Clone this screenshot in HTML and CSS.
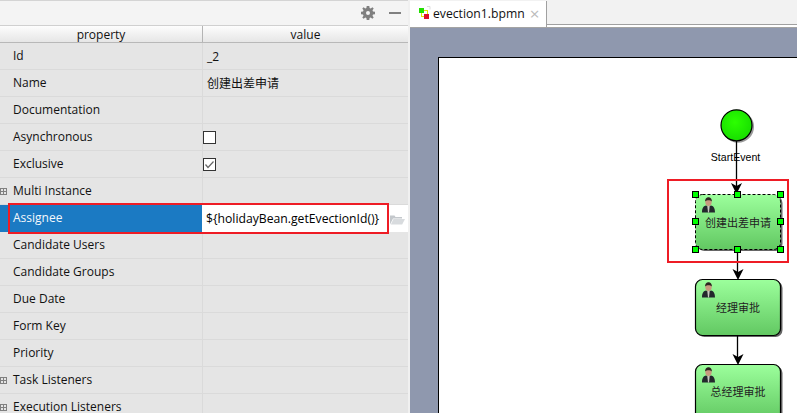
FILE: index.html
```html
<!DOCTYPE html>
<html lang="zh-CN">
<head>
  <meta charset="UTF-8" />
  <title>evection1.bpmn</title>
  <link rel="stylesheet" href="styles.css">
</head>
<body>
  <div class="app">

    <section class="props">
      <div class="toolbar">
        <svg class="gear" width="14" height="14" viewBox="0 0 14 14">
          <path fill="#808080" fill-rule="evenodd" d="M5.700 0h2.600l.3 2 1.100.5L11.400 1.300l1.300 1.300-1.200 1.700.5 1.100 2 .3v2.600l-2 .3-.5 1.100 1.200 1.700-1.300 1.300-1.700-1.200-1.100.5-.3 2H5.700l-.3-2-1.100-.5-1.700 1.200-1.300-1.300 1.200-1.700-.5-1.100-2-.3V5.700l2-.3.5-1.100L1.300 2.600l1.300-1.300 1.700 1.200 1.100-.5zM7 5a2 2 0 1 0 0 4 2 2 0 0 0 0-4z"/>
        </svg>
        <span class="minimize"></span>
      </div>

      <div class="table-head">
        <div class="col-name">property</div>
        <div class="col-value">value</div>
      </div>

      <div class="row"><div class="cell-name">Id</div><div class="cell-value">_2</div></div>
      <div class="row"><div class="cell-name">Name</div><div class="cell-value">创建出差申请</div></div>
      <div class="row"><div class="cell-name">Documentation</div><div class="cell-value"></div></div>
      <div class="row"><div class="cell-name">Asynchronous</div><div class="cell-value"><span class="checkbox"></span></div></div>
      <div class="row">
        <div class="cell-name">Exclusive</div>
        <div class="cell-value">
          <span class="checkbox">
            <svg width="11" height="11" viewBox="0 0 11 11"><path d="M1.500 5.500l2.500 3 5.500-6" fill="none" stroke="#666" stroke-width="1.200"/></svg>
          </span>
        </div>
      </div>
      <div class="row"><div class="cell-name"><span class="expander"></span>Multi Instance</div><div class="cell-value"></div></div>
      <div class="row row-selected">
        <div class="cell-name">Assignee</div>
        <div class="cell-value">
          <span class="value-input">${holidayBean.getEvectionId()}</span>
          <svg class="folder" width="15" height="11" viewBox="0 0 15 11">
            <path fill="#c4c8cc" d="M0 1.500h4.500l1 1.500H12v1.500H3L0 10.500z"/>
            <path fill="#d8dbde" d="M3.500 5H15l-2.800 5.500H.8z"/>
          </svg>
        </div>
      </div>
      <div class="row"><div class="cell-name">Candidate Users</div><div class="cell-value"></div></div>
      <div class="row"><div class="cell-name">Candidate Groups</div><div class="cell-value"></div></div>
      <div class="row"><div class="cell-name">Due Date</div><div class="cell-value"></div></div>
      <div class="row"><div class="cell-name">Form Key</div><div class="cell-value"></div></div>
      <div class="row"><div class="cell-name">Priority</div><div class="cell-value"></div></div>
      <div class="row"><div class="cell-name"><span class="expander"></span>Task Listeners</div><div class="cell-value"></div></div>
      <div class="row"><div class="cell-name"><span class="expander"></span>Execution Listeners</div><div class="cell-value"></div></div>

      <div class="callout callout-row"></div>
    </section>

    <section class="editor">
      <div class="tabs">
        <div class="tab">
          <svg class="tab-icon" width="14" height="14" viewBox="0 0 14 14">
            <rect x="2.500" y="4.500" width="6" height="6" fill="none" stroke="#e6e600" stroke-width="1"/>
            <path d="M8 .5h3M11 .5v3" fill="none" stroke="#ddd"/>
            <rect x="0" y="2" width="5" height="5" fill="#22e000"/>
            <rect x="5" y="8" width="5" height="5" fill="#e0102c"/>
          </svg>
          <span class="tab-title">evection1.bpmn</span>
          <span class="tab-close">×</span>
        </div>
      </div>

      <div class="canvas">
        <div class="sheet"></div>

        <svg class="diagram" width="387" height="385" viewBox="410 28 387 385">
          <defs>
            <linearGradient id="taskFill" x1="0" y1="0" x2="0" y2="1">
              <stop offset="0" stop-color="#9cff9c"/>
              <stop offset="1" stop-color="#62c862"/>
            </linearGradient>
            <radialGradient id="startFill" cx="0.45" cy="0.4" r="0.7">
              <stop offset="0" stop-color="#2cff00"/>
              <stop offset="1" stop-color="#14d800"/>
            </radialGradient>
            <g id="user">
              <path fill="#23282c" d="M0 15.500c0-5 2-6.500 4-7l2.500 1 2.500-1c2 .5 4 2 4 7z"/>
              <path fill="#c8c8c0" d="M5.300 9h2.400L7 15.500H6z"/>
              <ellipse cx="6.500" cy="5" rx="3.200" ry="4" fill="#c89a80"/>
              <path fill="#2c2420" d="M3.200 4.500C3 1.300 5 .3 6.500.3s3.500 1 3.300 4.200C8.500 2.800 4.500 2.800 3.200 4.500z"/>
            </g>
            <path id="head" d="M0 0l-5.500-11 5.500 3 5.500-3z" fill="#000"/>
          </defs>

          <circle cx="738" cy="126.800" r="16" fill="#555" opacity=".6"/>
          <circle cx="736.500" cy="125.300" r="15.500" fill="url(#startFill)" stroke="#000" stroke-width="1.200"/>
          <path d="M736.500 141v48" stroke="#000" stroke-width="1.300"/>
          <use href="#head" x="736.500" y="194"/>

          <rect x="697.500" y="196" width="85" height="55" rx="7" fill="#666"/>
          <rect x="695.500" y="194.500" width="85" height="55" rx="7" fill="url(#taskFill)"/>
          <rect x="695.500" y="194.500" width="85" height="55" rx="7" fill="none" stroke="#000" stroke-dasharray="3 2"/>
          <use href="#user" x="702" y="197"/>

          <path d="M737.500 250v25" stroke="#000" stroke-width="1.300"/>
          <use href="#head" x="738" y="280"/>

          <rect x="697.500" y="281" width="85" height="56" rx="7" fill="#666"/>
          <rect x="695.500" y="279.500" width="85" height="56" rx="7" fill="url(#taskFill)" stroke="#000" stroke-width="1.200"/>
          <use href="#user" x="702" y="282"/>

          <path d="M737.500 336v24" stroke="#000" stroke-width="1.300"/>
          <use href="#head" x="738" y="365"/>

          <rect x="697.500" y="366" width="85" height="56" rx="7" fill="#666"/>
          <rect x="695.500" y="364.500" width="85" height="56" rx="7" fill="url(#taskFill)" stroke="#000" stroke-width="1.200"/>
          <use href="#user" x="702" y="367"/>

          <g fill="#00ff00" stroke="#000" stroke-width="1">
            <rect x="692.500" y="191.500" width="6" height="6"/>
            <rect x="734.500" y="191.500" width="6" height="6"/>
            <rect x="777.500" y="191.500" width="6" height="6"/>
            <rect x="692.500" y="218.500" width="6" height="6"/>
            <rect x="777.500" y="218.500" width="6" height="6"/>
            <rect x="692.500" y="246.500" width="6" height="6"/>
            <rect x="734.500" y="246.500" width="6" height="6"/>
            <rect x="777.500" y="246.500" width="6" height="6"/>
          </g>
        </svg>

        <span class="node-label label-start">StartEvent</span>
        <span class="node-label label-task1">创建出差申请</span>
        <span class="node-label label-task2">经理审批</span>
        <span class="node-label label-task3">总经理审批</span>

        <div class="callout callout-node"></div>
      </div>
    </section>

  </div>
</body>
</html>
```

FILE: styles.css
```css
* { box-sizing: border-box; }

html, body {
  margin: 0;
  padding: 0;
  height: 100%;
  overflow: hidden;
}

body {
  font-family: 'Open Sans', 'Noto Sans CJK SC', sans-serif;
  font-size: 12px;
  color: #111;
  background: #f0f0f0;
}

.app {
  display: flex;
  height: 413px;
}

/* property sheet */
.props {
  position: relative;
  width: 408px;
  flex: none;
  background: #e5e5e5;
  border-top: 1px solid #d4d4d4;
  overflow: hidden;
}

.toolbar {
  height: 25px;
  display: flex;
  align-items: center;
  justify-content: flex-end;
  gap: 14px;
  padding: 0 7px 1px 0;
  background: #f4f4f4;
  border-bottom: 1px solid #d0d0d0;
}

.minimize {
  width: 12px;
  height: 2px;
  background: #808080;
}

.table-head {
  display: flex;
  height: 17px;
  line-height: 18px;
  text-align: center;
  background: linear-gradient(#fdfdfd, #e6e6e6);
  border-bottom: 1px solid #b8b8b8;
}

.col-name {
  width: 203px;
  border-right: 1px solid #b4b4b4;
}

.col-value {
  flex: 1;
}

.row {
  display: flex;
  height: 27px;
  border-bottom: 1px solid #dadada;
}

.cell-name {
  width: 203px;
  padding-left: 13px;
  line-height: 25px;
  border-right: 1px solid #dadada;
  position: relative;
}

.cell-value {
  flex: 1;
  padding: 1px 0 0 4px;
  line-height: 26px;
  display: flex;
  align-items: center;
}

.expander {
  position: absolute;
  left: 0;
  top: 10px;
  width: 7px;
  height: 7px;
  border: 1px solid #808080;
  background: linear-gradient(#808080, #808080) center / 5px 1px no-repeat,
              linear-gradient(#808080, #808080) center / 1px 5px no-repeat;
}

.checkbox {
  width: 13px;
  height: 13px;
  margin-left: -4px;
  border: 1px solid #333;
  background: #fff;
  display: flex;
  align-items: center;
  justify-content: center;
}

.row-selected {
  border-bottom: none;
}

.row-selected .cell-name {
  width: 202px;
  background: #1b7ac3;
  color: #f4f8fc;
  border-right: none;
  line-height: 26px;
}

.row-selected .cell-value {
  background: #fff;
  padding-left: 4px;
  color: #000;
}

.value-input {
  flex: 1;
  font-size: 12.2px;
}

.folder {
  margin-right: 3px;
}

.callout {
  position: absolute;
  border: 2px solid #ee1c25;
  pointer-events: none;
}

.callout-row {
  left: 8px;
  top: 202px;
  width: 381px;
  height: 31px;
}

/* editor */
.editor {
  flex: 1;
  margin-left: 2px;
  display: flex;
  flex-direction: column;
  min-width: 0;
}

.tabs {
  height: 28px;
  padding-top: 1px;
  background: linear-gradient(#f2f2f2 24px, #a0a0a0 24px, #a0a0a0 25px, #fff 25px, #fff 27px, #a4a4a4 27px);
}

.tab {
  width: 137px;
  height: 26px;
  display: flex;
  align-items: center;
  padding: 0 0 2px 9px;
  background: #fff;
  border-right: 1px solid #a0a0a0;
  font-size: 12.2px;
}

.tab-icon {
  flex: none;
}

.tab-title {
  color: #111;
}

.tab-close {
  margin-left: 5px;
  color: #bbb;
  font-size: 17px;
  line-height: 1;
}

.canvas {
  position: relative;
  flex: 1;
  background: #8f98ae;
  overflow: hidden;
}

.sheet {
  position: absolute;
  left: 28px;
  top: 29px;
  width: 400px;
  height: 400px;
  background: #fff;
  border: 1px solid #000;
}

.diagram {
  position: absolute;
  left: 0;
  top: 0;
}

.node-label {
  position: absolute;
  font-family: 'Liberation Sans', 'Noto Sans CJK SC', sans-serif;
  font-size: 11px;
  line-height: 12px;
  white-space: nowrap;
  color: #222;
  transform: translateX(-50%);
}

.label-start { left: 325.5px; top: 123px; color: #000; font-size: 10.6px; }
.label-task1 { left: 328px; top: 189px; }
.label-task2 { left: 328px; top: 274px; }
.label-task3 { left: 328px; top: 358px; }

.callout-node {
  left: 257px;
  top: 151px;
  width: 122px;
  height: 84px;
}
```
